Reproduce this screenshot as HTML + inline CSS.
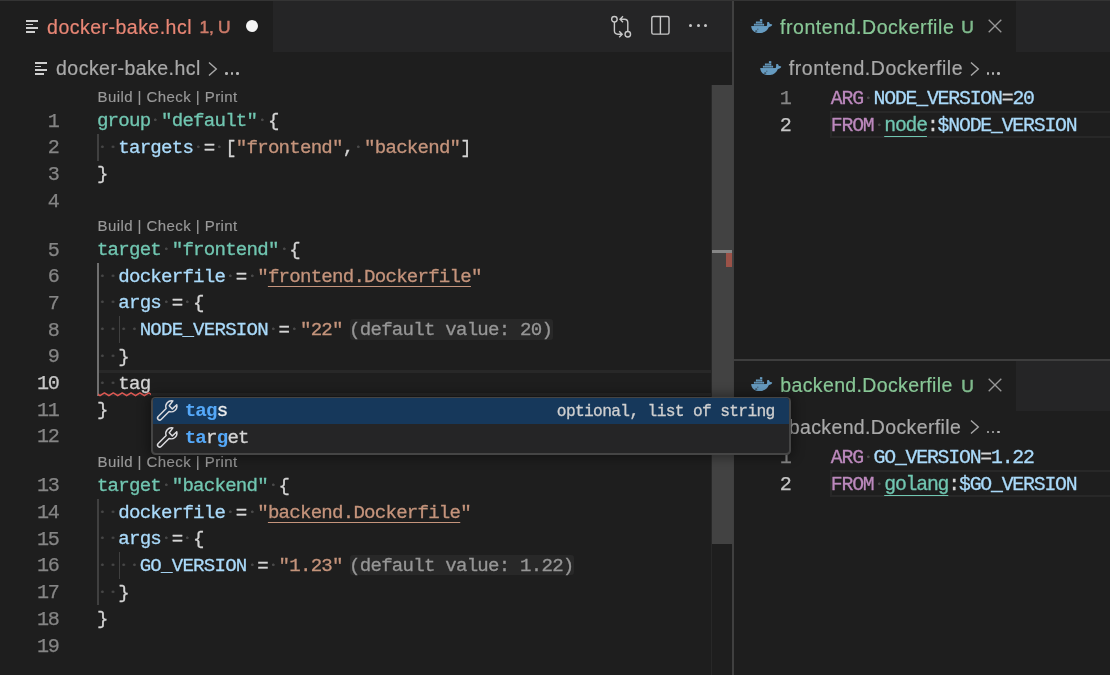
<!DOCTYPE html>
<html><head><meta charset="utf-8"><title>docker-bake.hcl</title>
<style>
*{box-sizing:border-box}
html,body{margin:0;padding:0;overflow:hidden}
body{width:1110px;height:675px;overflow:hidden;position:relative;background:#1E1E1E;font-family:"Liberation Sans",sans-serif;color:#D4D4D4}
.abs{position:absolute}
.mono{font-family:"Liberation Mono",monospace;font-size:19.1px;letter-spacing:-0.7719px;white-space:pre}
.cl{-webkit-text-stroke:0.3px currentColor;position:absolute;height:26.694000000000003px;line-height:26.694000000000003px;font-family:"Liberation Mono",monospace;font-size:19.1px;letter-spacing:-0.7719px;white-space:pre;color:#D4D4D4}
.num{-webkit-text-stroke:0.25px currentColor;position:absolute;height:26.694000000000003px;line-height:26.694000000000003px;font-family:"Liberation Mono",monospace;font-size:20.1px;letter-spacing:-1.3720px;white-space:pre;color:#858585;text-align:right}
.num.act{color:#C6C6C6}
.cl b{-webkit-text-stroke:0.05px currentColor}
.ws{background-image:radial-gradient(circle at 50% 9.80px,#484848 0,#484848 0.9px,rgba(72,72,72,0) 1.75px);background-size:10.69px 100%;background-repeat:repeat-x}
.lens{-webkit-text-stroke:0.15px currentColor;position:absolute;font-size:15px;letter-spacing:.43px;color:#999;white-space:pre;height:22.2px;line-height:22.2px}
.ui{-webkit-text-stroke:0.2px currentColor;position:absolute;font-size:19.5px;white-space:pre;height:30px;line-height:30px}
.u{text-decoration:underline;text-decoration-thickness:1.45px;text-underline-offset:4.1px}
.u2{text-decoration:underline;text-decoration-thickness:1.45px;text-underline-offset:4.6px}
.hint{color:#969696;background:#292929;border-radius:3px;}
</style></head>
<body><div id="root" style="position:absolute;left:0;top:0;width:1110px;height:675px;overflow:hidden;will-change:transform">
<div class="abs" style="left:0.00px;top:0.00px;width:732.60px;height:51.80px;background:#252526;"></div>
<div class="abs" style="left:0.00px;top:0.00px;width:272.80px;height:51.80px;background:#1E1E1E;"></div>
<div class="abs" style="left:734.10px;top:0.00px;width:375.90px;height:51.80px;background:#252526;"></div>
<div class="abs" style="left:734.10px;top:0.00px;width:281.70px;height:51.80px;background:#1E1E1E;"></div>
<div class="abs" style="left:734.10px;top:360.40px;width:375.90px;height:50.50px;background:#252526;"></div>
<div class="abs" style="left:734.10px;top:360.40px;width:281.70px;height:50.50px;background:#1E1E1E;"></div>
<div class="abs" style="left:734.00px;top:359.00px;width:376.00px;height:2.00px;background:#3E3E3E;"></div>
<div class="abs" style="left:732.00px;top:0.00px;width:2.00px;height:675.00px;background:#404040;"></div>
<div class="abs" style="left:0.00px;top:0.00px;width:1110.00px;height:1.00px;background:#343434;"></div>
<div class="abs" style="left:711.30px;top:84.60px;width:1.00px;height:590.40px;background:#282828;"></div>
<div class="abs" style="left:711.90px;top:84.90px;width:21.20px;height:458.70px;background:#424242;"></div>
<div class="abs" style="left:711.90px;top:250.40px;width:20.30px;height:2.60px;background:#868686;"></div>
<div class="abs" style="left:725.90px;top:253.00px;width:6.30px;height:14.40px;background:#9B5248;"></div>
<div class="abs" style="left:25.80px;top:19.65px;width:12.20px;height:2.10px;background:#CFCFCF;"></div>
<div class="abs" style="left:25.80px;top:23.55px;width:6.90px;height:1.70px;background:#CFCFCF;"></div>
<div class="abs" style="left:25.80px;top:27.10px;width:12.20px;height:2.00px;background:#CFCFCF;"></div>
<div class="abs" style="left:25.80px;top:31.00px;width:9.10px;height:2.00px;background:#CFCFCF;"></div>
<div class="ui" style="left:47.10px;top:11.54px;color:#E88675;letter-spacing:0.48px;font-size:19.5px;">docker-bake.hcl</div>
<div class="ui" style="left:199.60px;top:12.27px;color:#CC7A69;letter-spacing:-0.3px;font-size:17.4px;-webkit-text-stroke:0.5px #CC7A69;">1, U</div>
<div class="abs" style="left:246.1px;top:20.2px;width:11.9px;height:11.9px;border-radius:6px;background:#F6F6F6"></div>
<div class="abs" style="left:34.60px;top:61.65px;width:12.20px;height:2.10px;background:#CFCFCF;"></div>
<div class="abs" style="left:34.60px;top:65.55px;width:6.90px;height:1.70px;background:#CFCFCF;"></div>
<div class="abs" style="left:34.60px;top:69.10px;width:12.20px;height:2.00px;background:#CFCFCF;"></div>
<div class="abs" style="left:34.60px;top:73.00px;width:9.10px;height:2.00px;background:#CFCFCF;"></div>
<div class="ui" style="left:56.00px;top:53.24px;color:#A9A9A9;letter-spacing:0.48px;font-size:19.5px;">docker-bake.hcl</div>
<svg class="abs" style="left:208.30px;top:60.50px" width="10" height="16" viewBox="0 0 10 16"><path d="M1.0 1.4 L8.3 8 L1.0 14.6" stroke="#A9A9A9" stroke-width="1.4" fill="none"/></svg>
<div class="abs" style="left:225.40px;top:72.20px;width:2.4px;height:2.4px;border-radius:1.2px;background:#B4B4B4"></div>
<div class="abs" style="left:230.80px;top:72.20px;width:2.4px;height:2.4px;border-radius:1.2px;background:#B4B4B4"></div>
<div class="abs" style="left:236.20px;top:72.20px;width:2.4px;height:2.4px;border-radius:1.2px;background:#B4B4B4"></div>
<svg class="abs" style="left:608px;top:13px" width="28" height="28" viewBox="0 0 28 28" fill="none" stroke="#C8C8C8" stroke-width="1.4">
<circle cx="6.4" cy="6.3" r="2.75"/><circle cx="19.8" cy="21.2" r="2.75"/>
<path d="M6.4 8.9 V17.8 Q6.4 21.2 9.8 21.2 H13.8 M11.2 18.2 L14.2 21.2 L11.2 24.2"/>
<path d="M19.8 18.6 V9.7 Q19.8 6.3 16.4 6.3 H12.4 M15 3.3 L12 6.3 L15 9.3"/>
</svg>
<svg class="abs" style="left:649px;top:13px" width="24" height="24" viewBox="0 0 24 24" fill="none" stroke="#C8C8C8" stroke-width="1.4">
<rect x="2.8" y="3.5" width="17.2" height="17.6" rx="1.6"/><path d="M11.4 3.5 V21.1"/></svg>
<div class="abs" style="left:689.30px;top:24.20px;width:3px;height:3px;border-radius:1.5px;background:#C8C8C8"></div>
<div class="abs" style="left:696.70px;top:24.20px;width:3px;height:3px;border-radius:1.5px;background:#C8C8C8"></div>
<div class="abs" style="left:704.20px;top:24.20px;width:3px;height:3px;border-radius:1.5px;background:#C8C8C8"></div>
<svg class="abs" style="left:751.00px;top:19.00px" width="21.6" height="14.4" viewBox="0 0 21.6 14.4"><g fill="#669BC0">
<path d="M0.2 7.0 L15.7 7.0 C16.3 6.0 16.3 4.6 15.9 3.6 C16.3 3.0 17.2 2.7 17.7 3.1 C18.4 3.8 18.8 4.6 18.9 5.3 C19.7 4.9 20.7 5.2 21.3 5.8 C20.7 7.2 19.4 7.9 17.9 7.9 C16.6 11.4 13.4 14.1 8.6 14.1 C3.6 14.1 0.4 11.6 0.2 7.0 Z"/>
<rect x="2.9" y="4.75" width="10.2" height="2.0"/>
<rect x="4.9" y="2.5" width="6.4" height="2.0"/>
<rect x="8.9" y="0.15" width="2.4" height="2.1"/>
</g><g fill="#1E1E1E" fill-opacity="0.6"><rect x="4.8" y="4.75" width="0.3" height="2"/><rect x="6.85" y="2.5" width="0.3" height="4.25"/><rect x="8.85" y="2.5" width="0.3" height="4.25"/><rect x="10.95" y="4.75" width="0.3" height="2"/><rect x="0.2" y="6.75" width="15" height="0.3"/></g>
<ellipse cx="5.2" cy="12.0" rx="1.15" ry="0.55" fill="#1E1E1E" fill-opacity="1"/><ellipse cx="6.8" cy="10.1" rx="0.8" ry="0.45" fill="#1E1E1E" fill-opacity="0.9"/></svg>
<div class="ui" style="left:780.00px;top:11.54px;color:#88C796;letter-spacing:0.56px;font-size:19.5px;">frontend.Dockerfile</div>
<div class="ui" style="left:961.30px;top:12.27px;color:#7FBA8C;letter-spacing:0px;font-size:17.4px;-webkit-text-stroke:0.5px #7FBA8C;">U</div>
<svg class="abs" style="left:987.20px;top:18.40px" width="16" height="16" viewBox="-8 -8 16 16"><path d="M-6.3 -6.3 L6.3 6.3 M6.3 -6.3 L-6.3 6.3" stroke="#979797" stroke-width="1.35" fill="none"/></svg>
<svg class="abs" style="left:760.00px;top:60.60px" width="21.6" height="14.4" viewBox="0 0 21.6 14.4"><g fill="#669BC0">
<path d="M0.2 7.0 L15.7 7.0 C16.3 6.0 16.3 4.6 15.9 3.6 C16.3 3.0 17.2 2.7 17.7 3.1 C18.4 3.8 18.8 4.6 18.9 5.3 C19.7 4.9 20.7 5.2 21.3 5.8 C20.7 7.2 19.4 7.9 17.9 7.9 C16.6 11.4 13.4 14.1 8.6 14.1 C3.6 14.1 0.4 11.6 0.2 7.0 Z"/>
<rect x="2.9" y="4.75" width="10.2" height="2.0"/>
<rect x="4.9" y="2.5" width="6.4" height="2.0"/>
<rect x="8.9" y="0.15" width="2.4" height="2.1"/>
</g><g fill="#1E1E1E" fill-opacity="0.6"><rect x="4.8" y="4.75" width="0.3" height="2"/><rect x="6.85" y="2.5" width="0.3" height="4.25"/><rect x="8.85" y="2.5" width="0.3" height="4.25"/><rect x="10.95" y="4.75" width="0.3" height="2"/><rect x="0.2" y="6.75" width="15" height="0.3"/></g>
<ellipse cx="5.2" cy="12.0" rx="1.15" ry="0.55" fill="#1E1E1E" fill-opacity="1"/><ellipse cx="6.8" cy="10.1" rx="0.8" ry="0.45" fill="#1E1E1E" fill-opacity="0.9"/></svg>
<div class="ui" style="left:788.80px;top:53.24px;color:#A9A9A9;letter-spacing:0.56px;font-size:19.5px;">frontend.Dockerfile</div>
<svg class="abs" style="left:969.50px;top:60.50px" width="10" height="16" viewBox="0 0 10 16"><path d="M1.0 1.4 L8.3 8 L1.0 14.6" stroke="#A9A9A9" stroke-width="1.4" fill="none"/></svg>
<div class="abs" style="left:986.60px;top:72.20px;width:2.4px;height:2.4px;border-radius:1.2px;background:#B4B4B4"></div>
<div class="abs" style="left:992.00px;top:72.20px;width:2.4px;height:2.4px;border-radius:1.2px;background:#B4B4B4"></div>
<div class="abs" style="left:997.40px;top:72.20px;width:2.4px;height:2.4px;border-radius:1.2px;background:#B4B4B4"></div>
<svg class="abs" style="left:751.00px;top:377.30px" width="21.6" height="14.4" viewBox="0 0 21.6 14.4"><g fill="#669BC0">
<path d="M0.2 7.0 L15.7 7.0 C16.3 6.0 16.3 4.6 15.9 3.6 C16.3 3.0 17.2 2.7 17.7 3.1 C18.4 3.8 18.8 4.6 18.9 5.3 C19.7 4.9 20.7 5.2 21.3 5.8 C20.7 7.2 19.4 7.9 17.9 7.9 C16.6 11.4 13.4 14.1 8.6 14.1 C3.6 14.1 0.4 11.6 0.2 7.0 Z"/>
<rect x="2.9" y="4.75" width="10.2" height="2.0"/>
<rect x="4.9" y="2.5" width="6.4" height="2.0"/>
<rect x="8.9" y="0.15" width="2.4" height="2.1"/>
</g><g fill="#1E1E1E" fill-opacity="0.6"><rect x="4.8" y="4.75" width="0.3" height="2"/><rect x="6.85" y="2.5" width="0.3" height="4.25"/><rect x="8.85" y="2.5" width="0.3" height="4.25"/><rect x="10.95" y="4.75" width="0.3" height="2"/><rect x="0.2" y="6.75" width="15" height="0.3"/></g>
<ellipse cx="5.2" cy="12.0" rx="1.15" ry="0.55" fill="#1E1E1E" fill-opacity="1"/><ellipse cx="6.8" cy="10.1" rx="0.8" ry="0.45" fill="#1E1E1E" fill-opacity="0.9"/></svg>
<div class="ui" style="left:780.30px;top:369.84px;color:#88C796;letter-spacing:0.36px;font-size:19.5px;">backend.Dockerfile</div>
<div class="ui" style="left:961.30px;top:370.57px;color:#7FBA8C;letter-spacing:0px;font-size:17.4px;-webkit-text-stroke:0.5px #7FBA8C;">U</div>
<svg class="abs" style="left:987.20px;top:376.90px" width="16" height="16" viewBox="-8 -8 16 16"><path d="M-6.3 -6.3 L6.3 6.3 M6.3 -6.3 L-6.3 6.3" stroke="#979797" stroke-width="1.35" fill="none"/></svg>
<svg class="abs" style="left:760.00px;top:419.70px" width="21.6" height="14.4" viewBox="0 0 21.6 14.4"><g fill="#669BC0">
<path d="M0.2 7.0 L15.7 7.0 C16.3 6.0 16.3 4.6 15.9 3.6 C16.3 3.0 17.2 2.7 17.7 3.1 C18.4 3.8 18.8 4.6 18.9 5.3 C19.7 4.9 20.7 5.2 21.3 5.8 C20.7 7.2 19.4 7.9 17.9 7.9 C16.6 11.4 13.4 14.1 8.6 14.1 C3.6 14.1 0.4 11.6 0.2 7.0 Z"/>
<rect x="2.9" y="4.75" width="10.2" height="2.0"/>
<rect x="4.9" y="2.5" width="6.4" height="2.0"/>
<rect x="8.9" y="0.15" width="2.4" height="2.1"/>
</g><g fill="#1E1E1E" fill-opacity="0.6"><rect x="4.8" y="4.75" width="0.3" height="2"/><rect x="6.85" y="2.5" width="0.3" height="4.25"/><rect x="8.85" y="2.5" width="0.3" height="4.25"/><rect x="10.95" y="4.75" width="0.3" height="2"/><rect x="0.2" y="6.75" width="15" height="0.3"/></g>
<ellipse cx="5.2" cy="12.0" rx="1.15" ry="0.55" fill="#1E1E1E" fill-opacity="1"/><ellipse cx="6.8" cy="10.1" rx="0.8" ry="0.45" fill="#1E1E1E" fill-opacity="0.9"/></svg>
<div class="ui" style="left:788.80px;top:412.14px;color:#A9A9A9;letter-spacing:0.36px;font-size:19.5px;">backend.Dockerfile</div>
<svg class="abs" style="left:969.50px;top:419.40px" width="10" height="16" viewBox="0 0 10 16"><path d="M1.0 1.4 L8.3 8 L1.0 14.6" stroke="#A9A9A9" stroke-width="1.4" fill="none"/></svg>
<div class="abs" style="left:986.60px;top:431.10px;width:2.4px;height:2.4px;border-radius:1.2px;background:#B4B4B4"></div>
<div class="abs" style="left:992.00px;top:431.10px;width:2.4px;height:2.4px;border-radius:1.2px;background:#B4B4B4"></div>
<div class="abs" style="left:997.40px;top:431.10px;width:2.4px;height:2.4px;border-radius:1.2px;background:#B4B4B4"></div>
<div class="abs" style="left:97.70px;top:369.54px;width:613.60px;height:3.10px;background:#282828;"></div>
<div class="abs" style="left:97.70px;top:393.33px;width:613.60px;height:3.10px;background:#282828;"></div>
<div class="abs" style="left:97.30px;top:133.84px;width:1.50px;height:26.69px;background:#404040;"></div>
<div class="abs" style="left:97.20px;top:262.86px;width:1.80px;height:133.47px;background:#707070;"></div>
<div class="abs" style="left:118.68px;top:316.25px;width:1.50px;height:26.69px;background:#404040;"></div>
<div class="abs" style="left:97.30px;top:498.66px;width:1.50px;height:106.78px;background:#404040;"></div>
<div class="abs" style="left:118.68px;top:552.05px;width:1.50px;height:26.69px;background:#404040;"></div>
<div class="lens" style="left:97.50px;top:86.20px">Build | Check | Print</div>
<div class="lens" style="left:97.50px;top:215.22px">Build | Check | Print</div>
<div class="lens" style="left:97.50px;top:451.02px">Build | Check | Print</div>
<div class="num" style="left:-1.60px;width:60px;top:108.55px">1</div>
<div class="cl" style="left:96.90px;top:108.02px"><span class="" style="color:#71C6B1">group</span><span class="ws"> </span><span class="" style="color:#71C6B1">"default"</span><span class="ws"> </span><span class="" style="color:#D4D4D4">{</span></div>
<div class="num" style="left:-1.60px;width:60px;top:135.24px">2</div>
<div class="cl" style="left:96.90px;top:134.71px"><span class="ws">  </span><span class="" style="color:#AADAFA">targets</span><span class="ws"> </span><span class="" style="color:#D4D4D4">=</span><span class="ws"> </span><span class="" style="color:#D4D4D4">[</span><span class="" style="color:#C5947C">"frontend"</span><span class="" style="color:#D4D4D4">,</span><span class="ws"> </span><span class="" style="color:#C5947C">"backend"</span><span class="" style="color:#D4D4D4">]</span></div>
<div class="num" style="left:-1.60px;width:60px;top:161.94px">3</div>
<div class="cl" style="left:96.90px;top:161.40px"><span class="" style="color:#D4D4D4">}</span></div>
<div class="num" style="left:-1.60px;width:60px;top:188.63px">4</div>
<div class="num" style="left:-1.60px;width:60px;top:237.57px">5</div>
<div class="cl" style="left:96.90px;top:237.04px"><span class="" style="color:#71C6B1">target</span><span class="ws"> </span><span class="" style="color:#71C6B1">"frontend"</span><span class="ws"> </span><span class="" style="color:#D4D4D4">{</span></div>
<div class="num" style="left:-1.60px;width:60px;top:264.26px">6</div>
<div class="cl" style="left:96.90px;top:263.73px"><span class="ws">  </span><span class="" style="color:#AADAFA">dockerfile</span><span class="ws"> </span><span class="" style="color:#D4D4D4">=</span><span class="ws"> </span><span class="" style="color:#C5947C">"</span><span class="u" style="color:#C5947C">frontend.Dockerfile</span><span class="" style="color:#C5947C">"</span></div>
<div class="num" style="left:-1.60px;width:60px;top:290.96px">7</div>
<div class="cl" style="left:96.90px;top:290.42px"><span class="ws">  </span><span class="" style="color:#AADAFA">args</span><span class="ws"> </span><span class="" style="color:#D4D4D4">=</span><span class="ws"> </span><span class="" style="color:#D4D4D4">{</span></div>
<div class="num" style="left:-1.60px;width:60px;top:317.65px">8</div>
<div class="cl" style="left:96.90px;top:317.12px"><span class="ws">    </span><span class="" style="color:#AADAFA">NODE_VERSION</span><span class="ws"> </span><span class="" style="color:#D4D4D4">=</span><span class="ws"> </span><span class="" style="color:#C5947C">"22"</span></div>
<div class="num" style="left:-1.60px;width:60px;top:344.35px">9</div>
<div class="cl" style="left:96.90px;top:343.81px"><span class="ws">  </span><span class="" style="color:#D4D4D4">}</span></div>
<div class="num act" style="left:-1.60px;width:60px;top:371.04px">10</div>
<div class="cl" style="left:96.90px;top:370.51px"><span class="ws">  </span><span class="" style="color:#D4D4D4">tag</span></div>
<div class="num" style="left:-1.60px;width:60px;top:397.73px">11</div>
<div class="cl" style="left:96.90px;top:397.20px"><span class="" style="color:#D4D4D4">}</span></div>
<div class="num" style="left:-1.60px;width:60px;top:424.43px">12</div>
<div class="num" style="left:-1.60px;width:60px;top:473.37px">13</div>
<div class="cl" style="left:96.90px;top:472.83px"><span class="" style="color:#71C6B1">target</span><span class="ws"> </span><span class="" style="color:#71C6B1">"backend"</span><span class="ws"> </span><span class="" style="color:#D4D4D4">{</span></div>
<div class="num" style="left:-1.60px;width:60px;top:500.06px">14</div>
<div class="cl" style="left:96.90px;top:499.53px"><span class="ws">  </span><span class="" style="color:#AADAFA">dockerfile</span><span class="ws"> </span><span class="" style="color:#D4D4D4">=</span><span class="ws"> </span><span class="" style="color:#C5947C">"</span><span class="u" style="color:#C5947C">backend.Dockerfile</span><span class="" style="color:#C5947C">"</span></div>
<div class="num" style="left:-1.60px;width:60px;top:526.76px">15</div>
<div class="cl" style="left:96.90px;top:526.22px"><span class="ws">  </span><span class="" style="color:#AADAFA">args</span><span class="ws"> </span><span class="" style="color:#D4D4D4">=</span><span class="ws"> </span><span class="" style="color:#D4D4D4">{</span></div>
<div class="num" style="left:-1.60px;width:60px;top:553.45px">16</div>
<div class="cl" style="left:96.90px;top:552.92px"><span class="ws">    </span><span class="" style="color:#AADAFA">GO_VERSION</span><span class="ws"> </span><span class="" style="color:#D4D4D4">=</span><span class="ws"> </span><span class="" style="color:#C5947C">"1.23"</span></div>
<div class="num" style="left:-1.60px;width:60px;top:580.14px">17</div>
<div class="cl" style="left:96.90px;top:579.61px"><span class="ws">  </span><span class="" style="color:#D4D4D4">}</span></div>
<div class="num" style="left:-1.60px;width:60px;top:606.84px">18</div>
<div class="cl" style="left:96.90px;top:606.30px"><span class="" style="color:#D4D4D4">}</span></div>
<div class="num" style="left:-1.60px;width:60px;top:633.53px">19</div>
<div class="abs" style="left:349.80px;top:319.05px;width:203.11px;height:20.6px;background:#282828;border-radius:3px"></div>
<div class="cl" style="left:349.10px;top:317.12px;color:#969696">(default value: 20)</div>
<div class="abs" style="left:349.80px;top:554.85px;width:224.49px;height:20.6px;background:#282828;border-radius:3px"></div>
<div class="cl" style="left:349.10px;top:552.92px;color:#969696">(default value: 1.22)</div>
<svg class="abs" style="left:97.70px;top:392.33px" width="53.45" height="5" viewBox="0 0 53.45 5"><path d="M-2.44 0.9 L2.00 3.7 L6.44 0.9 L10.88 3.7 L15.32 0.9 L19.76 3.7 L24.20 0.9 L28.64 3.7 L33.08 0.9 L37.52 3.7 L41.96 0.9 L46.40 3.7 L50.84 0.9 L55.28 3.7 L59.72 0.9 L64.16 3.7" stroke="#DF5953" stroke-width="1.5" fill="none" stroke-linejoin="round"/></svg>
<div class="abs" style="left:830.30px;top:111.29px;width:279.70px;height:27.19px;border:2.6px solid #282828;border-right:none"></div>
<div class="num" style="left:730.50px;width:60px;top:86.30px">1</div>
<div class="num act" style="left:730.50px;width:60px;top:113.00px">2</div>
<div class="cl" style="left:830.80px;top:86.38px;font-size:19.8px;letter-spacing:-1.1919px"><span class="" style="color:#BC89BD">ARG</span><span class="ws"> </span><span class="" style="color:#AADAFA">NODE_VERSION</span><span class="" style="color:#D4D4D4">=</span><span class="" style="color:#AADAFA">20</span></div>
<div class="cl" style="left:830.80px;top:113.08px;font-size:19.8px;letter-spacing:-1.1919px"><span class="" style="color:#BC89BD">FROM</span><span class="ws"> </span><span class="u2" style="color:#71C6B1">node</span><span class="" style="color:#D4D4D4">:</span><span class="" style="color:#AADAFA">$NODE_VERSION</span></div>
<div class="abs" style="left:830.30px;top:470.29px;width:279.70px;height:27.19px;border:2.6px solid #282828;border-right:none"></div>
<div class="num" style="left:730.50px;width:60px;top:445.30px">1</div>
<div class="num act" style="left:730.50px;width:60px;top:472.00px">2</div>
<div class="cl" style="left:830.80px;top:445.38px;font-size:19.8px;letter-spacing:-1.1919px"><span class="" style="color:#BC89BD">ARG</span><span class="ws"> </span><span class="" style="color:#AADAFA">GO_VERSION</span><span class="" style="color:#D4D4D4">=</span><span class="" style="color:#AADAFA">1.22</span></div>
<div class="cl" style="left:830.80px;top:472.08px;font-size:19.8px;letter-spacing:-1.1919px"><span class="" style="color:#BC89BD">FROM</span><span class="ws"> </span><span class="u2" style="color:#71C6B1">golang</span><span class="" style="color:#D4D4D4">:</span><span class="" style="color:#AADAFA">$GO_VERSION</span></div>
<div class="abs" style="left:151.30px;top:396.50px;width:639.50px;height:58.10px;background:#454545;border-radius:4.4px;box-shadow:0 0 11px 3px rgba(0,0,0,0.36)"></div>
<div class="abs" style="left:152.75px;top:397.95px;width:636.60px;height:55.20px;background:#252526;border-radius:3px;overflow:hidden"><div class="abs" style="left:0;top:0;width:100%;height:26.2px;background:#16385B"></div></div>
<svg class="abs" style="left:152.00px;top:396.00px" width="30" height="30" viewBox="0 0 30 30" fill="none" stroke="#DCDCE0" stroke-width="1.45" stroke-linejoin="round" stroke-linecap="round">
<path d="M20.9 4.9 A5.8 5.8 0 0 0 14.15 12.55 L6.2 20.5 A2.05 2.05 0 0 0 9.1 23.4 L17.05 15.45 A5.8 5.8 0 0 0 24.8 8.8 L20.3 12.9 L17.2 9.7 Z"/></svg>
<svg class="abs" style="left:152.00px;top:422.60px" width="30" height="30" viewBox="0 0 30 30" fill="none" stroke="#DCDCE0" stroke-width="1.45" stroke-linejoin="round" stroke-linecap="round">
<path d="M20.9 4.9 A5.8 5.8 0 0 0 14.15 12.55 L6.2 20.5 A2.05 2.05 0 0 0 9.1 23.4 L17.05 15.45 A5.8 5.8 0 0 0 24.8 8.8 L20.3 12.9 L17.2 9.7 Z"/></svg>
<div class="cl" style="left:184.7px;top:398.47px;color:#F0F0F0"><b style="color:#55A8F8">tag</b>s</div>
<div class="cl" style="left:184.7px;top:425.07px;color:#D4D4D4"><b style="color:#55A8F8">ta</b>r<b style="color:#55A8F8">g</b>et</div>
<div class="cl" style="left:556.82px;top:399.17px;color:#CFCFCF;font-size:16.235px;letter-spacing:-0.6561px">optional, list of string</div>
</div></body></html>
